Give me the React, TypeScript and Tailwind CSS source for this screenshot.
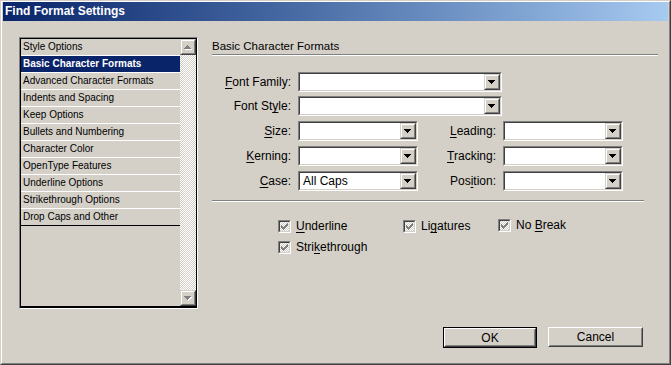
import React from "react";

const FONT = { fontFamily: '"Liberation Sans", Arial, sans-serif' };

function Tri({ dir = "down", color = "#000", shadow = false }: { dir?: "down" | "up"; color?: string; shadow?: boolean }) {
  const pts = dir === "down" ? "0,0 7,0 3.5,4" : "0,4 7,4 3.5,0";
  return (
    <svg width="8" height="5" viewBox="0 0 8 5" shapeRendering="crispEdges">
      {shadow && <polygon points={pts} fill="#fff" transform="translate(1,1)" />}
      <polygon points={pts} fill={color} />
    </svg>
  );
}

function Raised({ className = "", children }: { className?: string; children?: React.ReactNode }) {
  return (
    <div className={`border border-t-[#d4d0c8] border-l-[#d4d0c8] border-r-[#404040] border-b-[#404040] ${className}`}>
      <div className="w-full h-full border border-t-white border-l-white border-r-[#808080] border-b-[#808080] bg-[#d4d0c8] flex items-center justify-center">
        {children}
      </div>
    </div>
  );
}

function Combo({ w, value }: { w: string; value?: string }) {
  return (
    <div className={`h-[20px] ${w} border border-t-[#808080] border-l-[#808080] border-r-white border-b-white`}>
      <div className="h-full flex border border-t-[#404040] border-l-[#404040] border-r-[#d4d0c8] border-b-[#d4d0c8] bg-white">
        <div className="flex-1 pl-[3px] text-[12px] leading-[16px] text-black">{value}</div>
        <Raised className="w-[16px] h-full">
          <Tri />
        </Raised>
      </div>
    </div>
  );
}

function Label({ w, children }: { w: string; children: React.ReactNode }) {
  return <div className={`${w} text-right text-[12px] leading-[20px] text-black pr-[1px]`}>{children}</div>;
}

function CheckBox() {
  const cols: [number, number][] = [
    [2, 4],
    [3, 5],
    [4, 6],
    [3, 5],
    [2, 4],
    [1, 3],
    [0, 2],
  ];
  return (
    <div className="w-[13px] h-[13px] border border-t-[#808080] border-l-[#808080] border-r-white border-b-white">
      <div className="w-full h-full border border-t-[#404040] border-l-[#404040] border-r-[#d4d0c8] border-b-[#d4d0c8] bg-[repeating-conic-gradient(#ffffff_0_25%,#d4d0c8_0_50%)] bg-[length:2px_2px]">
        <svg width="9" height="9" viewBox="0 0 9 9" shapeRendering="crispEdges" className="block">
          {cols.map(([a, b], i) => (
            <rect key={i} x={1 + i} y={1 + a} width="1" height={b - a + 1} fill="#808080" />
          ))}
        </svg>
      </div>
    </div>
  );
}

function Check({ children, className = "" }: { children: React.ReactNode; className?: string }) {
  return (
    <div className={`flex items-center gap-[5px] ${className}`}>
      <CheckBox />
      <span className="text-[12px] leading-[14px] text-black">{children}</span>
    </div>
  );
}

const items = [
  "Style Options",
  "Basic Character Formats",
  "Advanced Character Formats",
  "Indents and Spacing",
  "Keep Options",
  "Bullets and Numbering",
  "Character Color",
  "OpenType Features",
  "Underline Options",
  "Strikethrough Options",
  "Drop Caps and Other",
];

export default function App() {
  return (
    <div style={FONT} className="w-[671px] h-[365px] overflow-hidden bg-[#d4d0c8] border border-t-[#d4d0c8] border-l-[#d4d0c8] border-r-[#404040] border-b-[#404040] flex flex-col">
      <div className="flex-1 flex flex-col px-px pb-px border border-t-white border-l-white border-r-[#808080] border-b-[#808080]">
        {/* Title bar */}
        <div className="h-[19px] bg-linear-to-r from-[#0a246a] to-[#a6caf0] flex items-center pl-[2px]">
          <span className="text-white font-bold text-[12px] leading-[19px]">Find Format Settings</span>
        </div>
        {/* Body */}
        <div className="flex-1 flex pl-[16px] pt-[16px]">
          {/* List */}
          <div className="w-[179px] h-[272px] border border-t-[#808080] border-l-[#808080] border-r-white border-b-white">
            <div className="w-full h-full flex border border-black border-b-2">
              <div className="flex-1 flex flex-col">
                {items.map((t, i) => (
                  <div
                    key={t}
                    className={`h-[17px] border-b pl-[2px] text-[10px] leading-[16px] whitespace-nowrap ${
                      i === items.length - 1 ? "border-black" : "border-white"
                    } ${i === 1 ? "bg-[#0a246a] text-white font-bold" : "text-black"}`}
                  >
                    {t}
                  </div>
                ))}
              </div>
              <div className="w-[16px] flex flex-col bg-[repeating-conic-gradient(#ffffff_0_25%,#d4d0c8_0_50%)] bg-[length:2px_2px]">
                <Raised className="w-[16px] h-[16px]">
                  <Tri dir="up" color="#808080" shadow />
                </Raised>
                <div className="flex-1" />
                <Raised className="w-[16px] h-[16px]">
                  <Tri dir="down" color="#808080" shadow />
                </Raised>
              </div>
            </div>
          </div>

          {/* Right panel */}
          <div className="ml-[14px] w-[446px] flex flex-col">
            <div className="h-[18px] border-b border-[#808080] text-[11.5px] leading-[18px] text-black">Basic Character Formats</div>
            <div className="h-px bg-white" />

            <div className="mt-[16px] flex">
              <Label w="w-[80px]">
                <u className="underline-offset-2">F</u>ont Family:
              </Label>
              <div className="ml-[6px]">
                <Combo w="w-[204px]" />
              </div>
            </div>
            <div className="mt-[4px] flex">
              <Label w="w-[80px]">
                Font St<u className="underline-offset-2">y</u>le:
              </Label>
              <div className="ml-[6px]">
                <Combo w="w-[204px]" />
              </div>
            </div>
            <div className="mt-[5px] flex">
              <Label w="w-[80px]">
                <u className="underline-offset-2">S</u>ize:
              </Label>
              <div className="ml-[6px]">
                <Combo w="w-[120px]" />
              </div>
              <Label w="w-[79px]">
                <u className="underline-offset-2">L</u>eading:
              </Label>
              <div className="ml-[6px]">
                <Combo w="w-[120px]" />
              </div>
            </div>
            <div className="mt-[5px] flex">
              <Label w="w-[80px]">
                <u className="underline-offset-2">K</u>erning:
              </Label>
              <div className="ml-[6px]">
                <Combo w="w-[120px]" />
              </div>
              <Label w="w-[79px]">
                <u className="underline-offset-2">T</u>racking:
              </Label>
              <div className="ml-[6px]">
                <Combo w="w-[120px]" />
              </div>
            </div>
            <div className="mt-[5px] flex">
              <Label w="w-[80px]">
                <u className="underline-offset-2">C</u>ase:
              </Label>
              <div className="ml-[6px]">
                <Combo w="w-[120px]" value="All Caps" />
              </div>
              <Label w="w-[79px]">
                Pos<u className="underline-offset-2">i</u>tion:
              </Label>
              <div className="ml-[6px]">
                <Combo w="w-[120px]" />
              </div>
            </div>

            <div className="mt-[9px] w-[432px] h-px bg-[#808080]" />
            <div className="w-[432px] h-px bg-white" />

            <div className="mt-[17px] flex items-start pl-[66px]">
              <Check className="w-[125px]">
                <u className="underline-offset-2">U</u>nderline
              </Check>
              <Check className="w-[95px]">
                Li<u className="underline-offset-2">g</u>atures
              </Check>
              <Check className="-mt-[1px]">
                No <u className="underline-offset-2">B</u>reak
              </Check>
            </div>
            <div className="mt-[7px] flex pl-[66px]">
              <Check>
                Stri<u className="underline-offset-2">k</u>ethrough
              </Check>
            </div>

            <div className="mt-[73px] flex pl-[231px] gap-[11px]">
              <div className="w-[94px] h-[21px] border border-black">
                <div className="w-full h-full border border-t-white border-l-white border-r-[#404040] border-b-[#404040]">
                  <div className="w-full h-full border border-t-[#d4d0c8] border-l-[#d4d0c8] border-r-[#808080] border-b-[#808080] flex items-center justify-center text-[12px] text-black">
                    OK
                  </div>
                </div>
              </div>
              <div className="w-[95px] h-[20px] border border-t-white border-l-white border-r-[#404040] border-b-[#404040]">
                <div className="w-full h-full border border-t-[#d4d0c8] border-l-[#d4d0c8] border-r-[#808080] border-b-[#808080] flex items-center justify-center text-[12px] text-black">
                  Cancel
                </div>
              </div>
            </div>
          </div>
        </div>
      </div>
    </div>
  );
}
